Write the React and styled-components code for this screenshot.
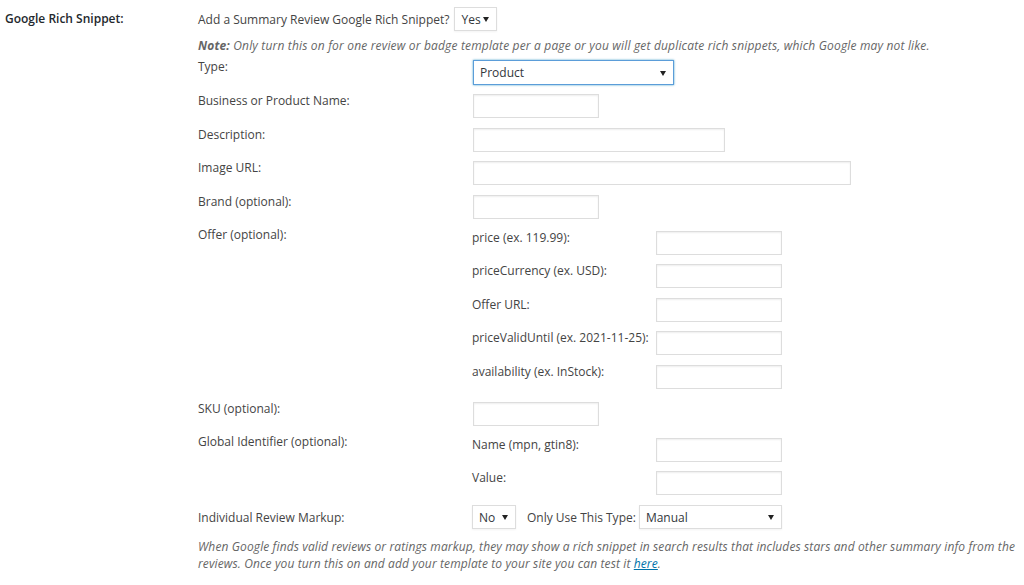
import React from "react";
import styled, { createGlobalStyle, css } from "styled-components";

const Global = createGlobalStyle`
  html, body { margin: 0; padding: 0; background: #fff; }
  body {
    font-family: "Open Sans", "Noto Sans", sans-serif;
    font-size: 12px;
    color: #444;
    -webkit-font-smoothing: antialiased;
  }
`;

const Page = styled.div`
  display: flex;
  width: 1024px;
  height: 585px;
  overflow: hidden;
`;

const Heading = styled.div`
  width: 193px;
  padding: 11px 0 0 5px;
  font-weight: 600;
  font-size: 12px;
  color: #23282d;
  line-height: 16px;
  flex-shrink: 0;
`;

const Content = styled.div`
  flex: 1;
  display: flex;
  flex-direction: column;
  padding-top: 7px;
`;

const TopRow = styled.div`
  display: flex;
  align-items: center;
  height: 24px;
  gap: 5px;
`;

const Note = styled.div`
  margin-top: 7px;
  line-height: 16px;
  font-style: italic;
  color: #666;
  height: 16px;
  letter-spacing: 0.17px;
  white-space: nowrap;
`;

const FieldRow = styled.div`
  display: flex;
  align-items: flex-start;
  margin-top: ${(p) => p.$gap ?? 9.5}px;
`;

const Label = styled.div`
  width: ${(p) => p.$w ?? 275}px;
  flex-shrink: 0;
  line-height: 14px;
  padding-top: ${(p) => p.$pt ?? 0}px;
  white-space: nowrap;
`;

const Nested = styled.div`
  display: flex;
  flex-direction: column;
  margin-top: 3px;
  margin-left: -1px;
`;

const NestedRow = styled.div`
  display: flex;
  align-items: flex-start;
  margin-top: ${(p) => (p.$first ? 0 : 9.5)}px;
`;

const Input = styled.div`
  box-sizing: border-box;
  width: ${(p) => p.$w}px;
  height: 24px;
  border: 1px solid #ddd;
  background: #fff;
  box-shadow: inset 0 1px 2px rgba(0, 0, 0, 0.07);
  flex-shrink: 0;
`;

const SelectBox = styled.div`
  box-sizing: border-box;
  width: ${(p) => p.$w}px;
  height: ${(p) => p.$h ?? 24}px;
  border: 1px solid #ddd;
  background: #fff;
  display: flex;
  align-items: center;
  justify-content: space-between;
  padding: 0 7px 0 6px;
  color: #32373c;
  flex-shrink: 0;
  box-shadow: 0 1px 2px rgba(0, 0, 0, 0.05);
  ${(p) =>
    p.$focus &&
    css`
      border-color: #5b9dd9;
      box-shadow: 0 0 2px rgba(30, 140, 190, 0.8);
    `}
`;

const Arrow = styled.span`
  width: 0;
  height: 0;
  border-left: 3px solid transparent;
  border-right: 3px solid transparent;
  border-top: 5px solid #222;
  margin-top: 1px;
`;

const InlineRow = styled.div`
  display: flex;
  align-items: center;
  gap: 11px;
  margin-left: -1px;
`;

const InlineLabel = styled.span`
  margin-right: -8px;
`;

const Help = styled.p`
  margin: 9px 0 0;
  font-style: italic;
  color: #666;
  line-height: 17px;
  font-size: 12px;
  letter-spacing: 0.12px;
  white-space: nowrap;
`;

const Link = styled.a`
  color: #0073aa;
  text-decoration: underline;
`;

function Select({ value, w, focus, h }) {
  return (
    <SelectBox $w={w} $focus={focus} $h={h}>
      <span>{value}</span>
      <Arrow />
    </SelectBox>
  );
}

const offerFields = [
  "price (ex. 119.99):",
  "priceCurrency (ex. USD):",
  "Offer URL:",
  "priceValidUntil (ex. 2021-11-25):",
  "availability (ex. InStock):",
];

export default function App() {
  return (
    <>
      <Global />
      <Page>
        <Heading>Google Rich Snippet:</Heading>
        <Content>
          <TopRow>
            <span>Add a Summary Review Google Rich Snippet?</span>
            <Select value="Yes" w={43} />
          </TopRow>
          <Note>
            <strong>Note:</strong> Only turn this on for one review or badge
            template per a page or you will get duplicate rich snippets, which
            Google may not like.
          </Note>
          <FieldRow $gap={6}>
            <Label>Type:</Label>
            <Select value="Product" w={201} focus h={25} />
          </FieldRow>
          <FieldRow $gap={9}>
            <Label>Business or Product Name:</Label>
            <Input $w={126} />
          </FieldRow>
          <FieldRow>
            <Label>Description:</Label>
            <Input $w={252} />
          </FieldRow>
          <FieldRow>
            <Label>Image URL:</Label>
            <Input $w={378} />
          </FieldRow>
          <FieldRow>
            <Label>Brand (optional):</Label>
            <Input $w={126} />
          </FieldRow>
          <FieldRow $gap={9}>
            <Label>Offer (optional):</Label>
            <Nested>
              {offerFields.map((f, i) => (
                <NestedRow key={f} $first={i === 0}>
                  <Label $w={184}>{f}</Label>
                  <Input $w={126} />
                </NestedRow>
              ))}
            </Nested>
          </FieldRow>
          <FieldRow $gap={13}>
            <Label>SKU (optional):</Label>
            <Input $w={126} />
          </FieldRow>
          <FieldRow $gap={9}>
            <Label>Global Identifier (optional):</Label>
            <Nested>
              <NestedRow $first>
                <Label $w={184}>Name (mpn, gtin8):</Label>
                <Input $w={126} />
              </NestedRow>
              <NestedRow>
                <Label $w={184}>Value:</Label>
                <Input $w={126} />
              </NestedRow>
            </Nested>
          </FieldRow>
          <FieldRow $gap={10}>
            <Label $pt={6}>Individual Review Markup:</Label>
            <InlineRow>
              <Select value="No" w={44} />
              <InlineLabel>Only Use This Type:</InlineLabel>
              <Select value="Manual" w={143} />
            </InlineRow>
          </FieldRow>
          <Help>
            When Google finds valid reviews or ratings markup, they may show a
            rich snippet in search results that includes stars and other
            summary info from the
            <br />
            reviews. Once you turn this on and add your template to your site
            you can test it <Link href="#">here</Link>.
          </Help>
        </Content>
      </Page>
    </>
  );
}
